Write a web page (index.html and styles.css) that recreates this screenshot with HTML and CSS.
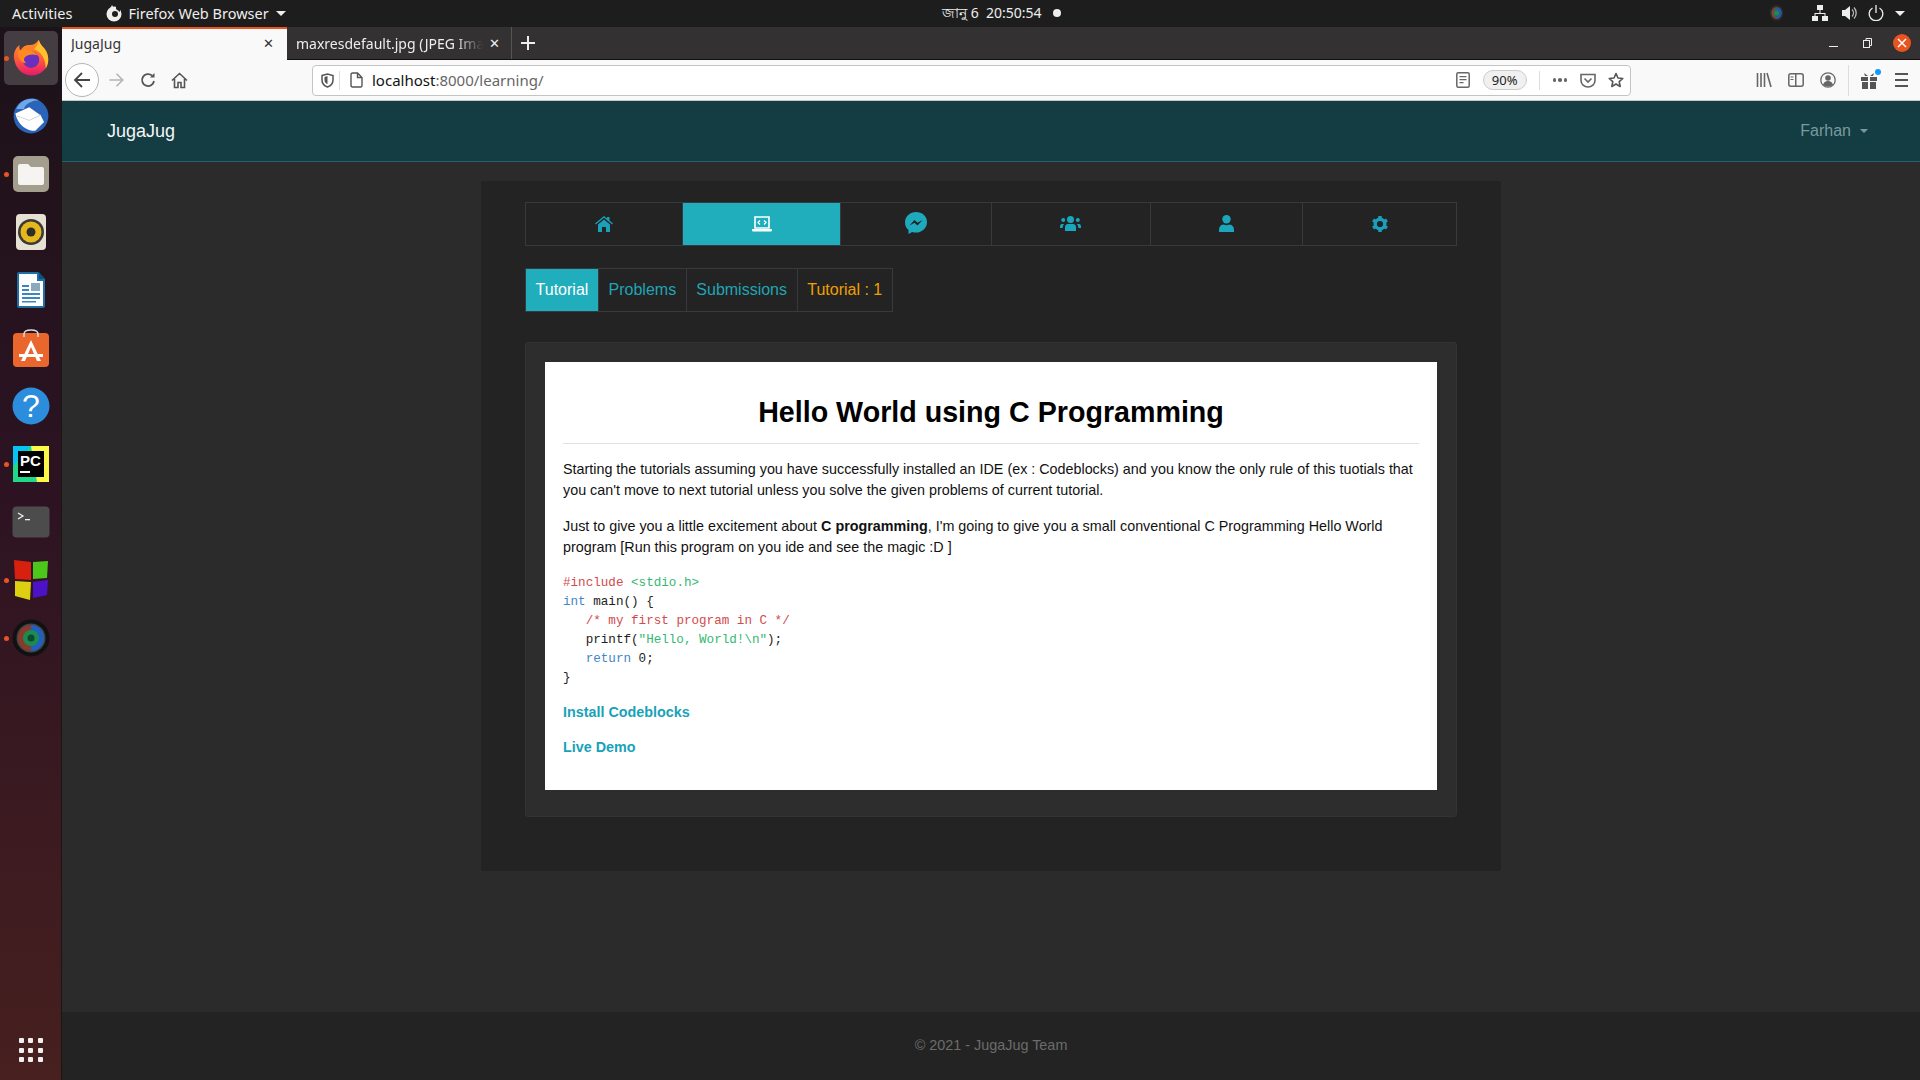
FILE: index.html
```html
<!DOCTYPE html>
<html lang="en">
<head>
    <meta charset="UTF-8">
    <title>JugaJug</title>
    <link rel="stylesheet" href="styles.css">
</head>
<body>
    <header class="topbar">
        <span class="activities">Activities</span>
        <div class="app-menu">
            <svg width="18" height="18" viewBox="0 0 18 18"><circle cx="9" cy="10" r="7.5" fill="#eee"/><circle cx="10" cy="10" r="3" fill="#1d1d1d"/><path d="M3.500 8 L7 1 L9 4.500 L7 8 Z" fill="#eee"/><path d="M11 2 L15 4 L15 8 L11 5 Z" fill="#1d1d1d"/></svg>
            <span>Firefox Web Browser</span>
            <i class="caret-white"></i>
        </div>
        <div class="clock"><span class="clock-text">জানু 6&nbsp; 20:50:54</span><i class="clock-dot"></i></div>
        <div class="tray">
            <svg class="tray-lens" width="15" height="18" viewBox="0 0 16 18"><ellipse cx="8" cy="9" rx="7.5" ry="8.5" fill="#2a2a2a"/><ellipse cx="8" cy="9" rx="5.500" ry="6.500" fill="#7a4a2a"/><ellipse cx="9.500" cy="9" rx="4" ry="5.500" fill="#2458a8"/><circle cx="8" cy="9" r="2.800" fill="#1d8a50"/></svg>
            <svg class="tray-net" width="16" height="16" viewBox="0 0 16 16" fill="#eee"><rect x="5" y="0" width="6" height="5"/><rect x="0" y="11" width="6" height="5"/><rect x="10" y="11" width="6" height="5"/><path d="M7.500 5h1v3h5v3h-1V9H3.500v2h-1V8h5z"/></svg>
            <svg class="tray-vol" width="16" height="16" viewBox="0 0 16 16"><path d="M0 5h3l5-4v14l-5-4H0z" fill="#eee"/><path d="M10 4.500a5 5 0 0 1 0 7M12 2.500a8 8 0 0 1 0 11" fill="none" stroke="#bbb" stroke-width="1.300"/></svg>
            <svg class="tray-power" width="16" height="16" viewBox="0 0 16 16" fill="none" stroke="#eee" stroke-width="1.300"><path d="M4.500 3a6.800 6.800 0 1 0 7 0"/><path d="M8 0v8"/></svg>
            <i class="caret-white"></i>
        </div>
    </header>

    <div class="desktop">
        <nav class="dock">
            <div class="dock-item dock-item-active"><i class="run-dot"></i>
                <svg width="40" height="40" viewBox="0 0 46 46">
                    <defs><linearGradient id="fx-body" x1="0" y1="0" x2="0" y2="1"><stop offset="0" stop-color="#ff9a1f"/><stop offset="0.55" stop-color="#ff5a3a"/><stop offset="1" stop-color="#e6186f"/></linearGradient></defs>
                    <path d="M32 2c1 5 4 7 7 11 5 7 5 17 0 23a20 20 0 0 1-35-10C2 18 5 11 10 8c-1 3 0 5 1 6 2-4 6-6 10-6 5 0 7-1 11-6z" fill="url(#fx-body)"/>
                    <path d="M32 2c1 5 4 7 7 11 5 7 5 16 1 22 0-10-5-20-14-22 2-2 6-5 6-11z" fill="#ffc22e"/>
                    <circle cx="23" cy="25" r="9.500" fill="#6a2fc0"/>
                    <path d="M8 16c5-4 12-4 16-1 2 1 4 2 7 5-6-2-12-1-15 2-2 2-1 5 2 7-6 0-11-6-10-13z" fill="#ff8a1f"/>
                </svg>
            </div>
            <div class="dock-item">
                <svg width="40" height="40" viewBox="0 0 46 46"><circle cx="23" cy="23" r="20" fill="#2a64b8"/><path d="M6 15C10 5 22 0 33 5 24 5 16 9 15 15z" fill="#6fa8e8"/><path d="M5 20l16-7 13 9 4 8-10 10C18 40 8 34 5 20z" fill="#fff"/><path d="M7 23l14 5 13-6" fill="none" stroke="#c8ccd4"/></svg>
            </div>
            <div class="dock-item"><i class="run-dot"></i>
                <svg width="38" height="38" viewBox="0 0 38 38"><rect width="36" height="36" x="1" y="1" rx="5" fill="#a39e8d"/><path d="M6 11q0-2 2-2h8l3 3h11q2 0 2 2v14q0 2-2 2H8q-2 0-2-2z" fill="#f5f4f1"/></svg>
            </div>
            <div class="dock-item">
                <svg width="32" height="38" viewBox="0 0 32 38"><rect width="30" height="36" x="1" y="1" rx="4" fill="#e6e1d3"/><circle cx="16" cy="19" r="13" fill="#3a3a36"/><circle cx="16" cy="19" r="10.500" fill="#e6b81e"/><circle cx="16" cy="19" r="4.500" fill="#2d2d2a"/></svg>
            </div>
            <div class="dock-item">
                <svg width="32" height="38" viewBox="0 0 32 38"><path d="M2 3q0-2 2-2h19l7 7v27q0 2-2 2H4q-2 0-2-2z" fill="#1d6fa5"/><path d="M4 3h18v7h6v25H4z" fill="#fff"/><path d="M24 1l6 7h-6z" fill="#12507c"/><path d="M7 14h7v2H7zM7 18h7v2H7zM7 22h18v2H7zM7 26h18v2H7zM7 30h14v1.500H7z" fill="#3a87bd"/><rect x="16" y="12" width="9" height="8" fill="#8aa8bf"/></svg>
            </div>
            <div class="dock-item">
                <svg width="38" height="40" viewBox="0 0 38 40"><rect x="1" y="5" width="36" height="34" rx="4" fill="#e9662c"/><path d="M12 9V6q0-4 7-4t7 4v3" fill="none" stroke="#ddd" stroke-width="1.500"/><path d="M19 12L9 33h4l6-14 6 14h4z" fill="#fff"/><path d="M7 26h24v3H7z" fill="#fff"/></svg>
            </div>
            <div class="dock-item">
                <svg width="38" height="38" viewBox="0 0 38 38"><circle cx="19" cy="19" r="18.500" fill="#2b8ddc"/><text x="19" y="30" text-anchor="middle" class="dock-help">?</text></svg>
            </div>
            <div class="dock-item"><i class="run-dot"></i>
                <svg width="36" height="36" viewBox="0 0 36 36"><rect width="36" height="36" fill="#21d789"/><path d="M18 0h18v36H24z" fill="#fcf84a"/><path d="M0 0h18L0 20z" fill="#07c3f2"/><rect x="5" y="5" width="26" height="26" fill="#000"/><text x="7" y="20" class="dock-pc">PC</text><rect x="7" y="25" width="10" height="2" fill="#fff"/></svg>
            </div>
            <div class="dock-item">
                <svg width="38" height="32" viewBox="0 0 38 32"><rect width="37" height="31" x="0.500" y="0.500" rx="4" fill="#4c4c4c"/><path d="M6 7l5 3-5 3" fill="none" stroke="#eee" stroke-width="1.300"/><path d="M13 13h5v1.300h-5z" fill="#eee"/></svg>
            </div>
            <div class="dock-item"><i class="run-dot"></i>
                <svg width="38" height="42" viewBox="0 0 38 42"><path d="M2 1l17 2v18L3 20z" fill="#d8200f"/><path d="M21 3l15-1-1 17-14 1z" fill="#4cc81a"/><path d="M3 22l16 1-1 18-15-4z" fill="#dcd010"/><path d="M21 23l15-2-1 15-14 3z" fill="#4c12c8"/></svg>
            </div>
            <div class="dock-item"><i class="run-dot"></i>
                <svg width="38" height="38" viewBox="0 0 38 38"><circle cx="19" cy="19" r="18.500" fill="#111"/><circle cx="19" cy="19" r="14.500" fill="#444"/><circle cx="19" cy="19" r="13" fill="#8a3a2a"/><path d="M19 6a13 13 0 0 1 0 26z" fill="#1f5fc0"/><circle cx="19" cy="19" r="8" fill="#1d8a50"/><circle cx="19" cy="19" r="3.500" fill="#0a4a30"/></svg>
            </div>
            <div class="dock-spacer"></div>
            <div class="dock-apps">
                <i></i><i></i><i></i><i></i><i></i><i></i><i></i><i></i><i></i>
            </div>
        </nav>

        <div class="browser">
            <div class="tabstrip">
                <div class="tab tab-active"><span class="tab-title">JugaJug</span><span class="tab-close">✕</span></div>
                <div class="tab"><span class="tab-title tab-fade">maxresdefault.jpg (JPEG Image</span><span class="tab-close">✕</span></div>
                <svg class="tab-new" width="14" height="14" viewBox="0 0 14 14"><path d="M6 0h2v6h6v2H8v6H6V8H0V6h6z" fill="#eee"/></svg>
                <div class="window-controls">
                    <i class="win-min"></i>
                    <svg class="win-restore" width="9" height="10" viewBox="0 0 9 10" fill="none" stroke="#eee"><rect x="0.500" y="2.500" width="6" height="7"/><path d="M3 2.500V0.500h5.500v7H7"/></svg>
                    <span class="win-close"><svg width="10" height="10" viewBox="0 0 10 10"><path d="M1 1l8 8M9 1l-8 8" stroke="#fff" stroke-width="1.500"/></svg></span>
                </div>
            </div>

            <div class="toolbar">
                <span class="back-btn"><svg width="18" height="18" viewBox="0 0 18 18" fill="none" stroke="#444" stroke-width="1.800"><path d="M17 9H2M9 2L2 9l7 7"/></svg></span>
                <svg class="tool-forward" width="17" height="16" viewBox="0 0 18 18" fill="none" stroke="#b4b4b4" stroke-width="1.800"><path d="M1 9h15M9 2l7 7-7 7"/></svg>
                <svg class="tool-reload" width="16" height="16" viewBox="0 0 16 16" fill="none" stroke="#555" stroke-width="1.800"><path d="M14 9a6 6 0 1 1-2-5.500"/><path d="M14.500 1v4.500H10" fill="#555" stroke="none"/></svg>
                <svg class="tool-home" width="17" height="17" viewBox="0 0 17 17" fill="none" stroke="#555" stroke-width="1.600"><path d="M1 8.500L8.500 1.500 16 8.500M3.500 7v8.500h3.500v-5h3v5h3.500V7"/></svg>

                <div class="urlbar">
                    <svg class="url-shield" width="13" height="15" viewBox="0 0 13 15"><path d="M1 2.500L6.500 1 12 2.500V7q0 5-5.500 7Q1 12 1 7z" fill="none" stroke="#555" stroke-width="1.500"/><path d="M6.500 3v8Q3.500 10 3.500 7V4z" fill="#555"/></svg>
                    <i class="url-sep"></i>
                    <svg class="url-page" width="13" height="16" viewBox="0 0 13 16" fill="none" stroke="#555" stroke-width="1.400"><path d="M2.500 1h5l4.500 4.500v8q0 1.500-1.500 1.500h-8Q1 15 1 13.500v-11Q1 1 2.500 1zM7.500 1v4.500H12"/></svg>
                    <span class="url-text"><b>localhost</b>:8000/learning/</span>
                    <svg class="url-reader" width="14" height="16" viewBox="0 0 14 16"><rect x="0.800" y="0.800" width="12.400" height="14.400" rx="1.500" fill="none" stroke="#666" stroke-width="1.500"/><path d="M3.500 4h7v1.300h-7zM3.500 7h7v1.300h-7zM3.500 10h4v1.300h-4z" fill="#666"/></svg>
                    <span class="url-zoom">90%</span>
                    <i class="url-sep url-sep-right"></i>
                    <span class="url-dots"><i></i><i></i><i></i></span>
                    <svg class="url-pocket" width="16" height="15" viewBox="0 0 16 15" fill="none" stroke="#666" stroke-width="1.600"><path d="M1 1.500h14v6a7 6.500 0 0 1-14 0z"/><path d="M4.500 5.500L8 9l3.500-3.500"/></svg>
                    <svg class="url-star" width="16" height="16" viewBox="0 0 16 16"><path d="M8 1.500l2 4.500 4.800.5-3.600 3.200 1 4.800L8 12l-4.200 2.500 1-4.800L1.200 6.500 6 6z" fill="none" stroke="#555" stroke-width="1.600" stroke-linejoin="round"/></svg>
                </div>

                <svg class="tool-library" width="16" height="16" viewBox="0 0 16 16" fill="none" stroke="#666" stroke-width="1.600"><path d="M1.500 1v14M5 1v14M8.500 1v14M11 1l4 14"/></svg>
                <svg class="tool-sidebar" width="16" height="14" viewBox="0 0 16 14"><rect x="0.800" y="0.800" width="14.400" height="12.400" rx="2" fill="none" stroke="#666" stroke-width="1.500"/><path d="M7 1h1.500v12H7z" fill="#666"/><path d="M2.500 3.500h3v1h-3zM2.500 6h3v1h-3z" fill="#666"/></svg>
                <svg class="tool-account" width="16" height="16" viewBox="0 0 16 16"><circle cx="8" cy="8" r="7.200" fill="none" stroke="#666" stroke-width="1.300"/><circle cx="8" cy="6" r="2.800" fill="#666"/><path d="M3 13q1-4 5-4t5 4q-5 3-10 0z" fill="#666"/></svg>
                <i class="tool-sep"></i>
                <span class="tool-gift">
                    <svg width="16" height="17" viewBox="0 0 16 17" fill="#555"><rect x="0" y="5" width="7" height="4"/><rect x="9" y="5" width="7" height="4"/><rect x="1" y="10" width="6" height="7"/><rect x="9" y="10" width="6" height="7"/><path d="M3 1l4 3H4zM13 1L9 4h3z"/></svg>
                    <i class="gift-dot"></i>
                </span>
                <span class="tool-menu"><i></i><i></i><i></i></span>
            </div>

            <div class="site">
                <div class="navbar">
                    <a class="brand">JugaJug</a>
                    <a class="nav-user">Farhan<i class="caret"></i></a>
                </div>

                <main class="content">
                    <div class="container">
                        <ul class="main-tabs">
                            <li>
                                <svg width="18" height="16" viewBox="0 0 18 16" fill="#1aa0b8"><path d="M9 0l3 2.500V1h2.500v3.600L18 7.500l-.8 1L9 1.800.8 8.500 0 7.500z"/><path d="M3 8.500L9 3.500l6 5V16h-4v-5H7v5H3z"/></svg>
                            </li>
                            <li class="active">
                                <svg width="20" height="16" viewBox="0 0 20 16"><path d="M3 1h14v11H3z" fill="none" stroke="#fff" stroke-width="1.600"/><path d="M8 4.500L6 6.500l2 2M12 4.500l2 2-2 2" fill="none" stroke="#fff" stroke-width="1.300"/><path d="M0 13h20v1.500q0 1-1 1H1q-1 0-1-1z" fill="#fff"/></svg>
                            </li>
                            <li class="tab-messenger">
                                <svg width="22" height="22" viewBox="0 0 22 22"><path d="M11 0C5 0 0 4.500 0 10.500c0 3 1.300 5.700 3.500 7.500v4l3.700-2c1.200.4 2.500.6 3.800.6 6 0 11-4.600 11-10.600S17 0 11 0z" fill="#1fa9bd"/><path d="M4.500 13.500L9.500 8l3 2.700L17.500 8l-5 5.500-3-2.700z" fill="#222"/></svg>
                            </li>
                            <li>
                                <svg width="21" height="15" viewBox="0 0 21 15" fill="#1aa7bd"><circle cx="10.500" cy="3.500" r="3.500"/><circle cx="3.200" cy="4" r="2"/><circle cx="17.800" cy="4" r="2"/><path d="M5 15v-3.500Q5 8 8 8h5q3 0 3 3.500V15z"/><path d="M0 11q0-3 2-3h2q-1 1-1.500 4H0zM21 11q0-3-2-3h-2q1 1 1.500 4H21z"/></svg>
                            </li>
                            <li>
                                <svg width="15" height="17" viewBox="0 0 15 17" fill="#1aa7bd"><circle cx="7.500" cy="4.200" r="4.200"/><path d="M0 17v-2q0-5 4.500-5.500 3 1.500 6 0Q15 10 15 15v2z"/></svg>
                            </li>
                            <li>
                                <svg width="16" height="16" viewBox="0 0 16 16"><circle cx="8" cy="8" r="4.800" fill="none" stroke="#1aa0bc" stroke-width="3.400"/><g stroke="#1aa0bc" stroke-width="3.400"><path d="M8 0v3M8 13v3"/><path d="M1 4l2.600 1.500M12.400 10.500L15 12"/><path d="M1 12l2.600-1.500M12.400 5.500L15 4"/></g></svg>
                            </li>
                        </ul>

                        <ul class="sub-tabs">
                            <li class="active">Tutorial</li>
                            <li>Problems</li>
                            <li>Submissions</li>
                            <li class="warn">Tutorial : 1</li>
                        </ul>

                        <section class="panel">
                            <article class="card">
                                <h1>Hello World using C Programming</h1>
                                <hr>
                                <p>Starting the tutorials assuming you have successfully installed an IDE (ex : Codeblocks) and you know the only rule of this tuotials that you can't move to next tutorial unless you solve the given problems of current tutorial.</p>
                                <p>Just to give you a little excitement about <b>C programming</b>, I'm going to give you a small conventional C Programming Hello World program [Run this program on you ide and see the magic :D ]</p>
<pre><span class="c-red">#include</span> <span class="c-green">&lt;stdio.h&gt;</span>
<span class="c-blue">int</span> main() {
   <span class="c-red">/* my first program in C */</span>
   printf(<span class="c-green">"Hello, World!\n"</span>);
   <span class="c-blue">return</span> 0;
}</pre>
                                <p><a class="link">Install Codeblocks</a></p>
                                <p><a class="link">Live Demo</a></p>
                            </article>
                        </section>
                    </div>
                </main>

                <footer class="footer">© 2021 - JugaJug Team</footer>
            </div>
        </div>
    </div>
</body>
</html>
```

FILE: styles.css
```css
* {
    margin: 0;
    padding: 0;
    box-sizing: border-box;
}

html, body {
    height: 100%;
    overflow: hidden;
}

body {
    display: flex;
    flex-direction: column;
    font-family: "Liberation Sans", Arial, sans-serif;
    background: #2b2b2b;
}

ul {
    list-style: none;
}

/* gnome bar */
.topbar {
    height: 27px;
    flex: none;
    display: flex;
    align-items: center;
    position: relative;
    padding: 0 0 1px 12px;
    background: #1d1d1d;
    color: #eee;
    font-family: "Noto Sans", sans-serif;
    font-size: 14.500px;
}

.app-menu {
    display: flex;
    align-items: center;
    margin-left: 33px;
    gap: 5px;
}

.caret-white {
    display: inline-block;
    border-top: 5px solid #eee;
    border-left: 5px solid transparent;
    border-right: 5px solid transparent;
    margin-left: 2px;
}

.clock {
    position: absolute;
    left: 942px;
    display: flex;
    align-items: center;
    gap: 12px;
    font-size: 14px;
    font-family: "Noto Sans", "DejaVu Sans", sans-serif;
}

.clock-text {
    padding-top: 2px;
}

.clock-dot {
    width: 8px;
    height: 8px;
    border-radius: 50%;
    background: #eee;
}

.tray {
    margin-left: auto;
    display: flex;
    align-items: center;
    padding-right: 15px;
}

.tray-lens {
    margin-right: 2px;
}

.tray-net {
    margin-left: 26px;
}

.tray-vol {
    margin-left: 14px;
}

.tray-power {
    margin-left: 10px;
}

.tray .caret-white {
    margin-left: 11px;
}

.desktop {
    flex: 1;
    display: flex;
    min-height: 0;
}

/* launcher */
.dock {
    width: 62px;
    flex: none;
    display: flex;
    flex-direction: column;
    padding-top: 2px;
    background: linear-gradient(180deg, #1c1219 0%, #2d1322 45%, #47201f 100%);
    border-right: 1px solid #1c1518;
}

.dock-item {
    height: 58px;
    flex: none;
    position: relative;
    display: flex;
    align-items: center;
    justify-content: center;
}

.dock-item-active::before {
    content: "";
    position: absolute;
    left: 4px;
    top: 2px;
    width: 54px;
    height: 54px;
    border-radius: 5px;
    background: #443d41;
}

.dock-item svg {
    position: relative;
}

.run-dot {
    position: absolute;
    left: 4px;
    top: 27px;
    width: 5px;
    height: 5px;
    border-radius: 50%;
    background: #e95420;
}

.dock-help {
    font-family: "Liberation Sans", sans-serif;
    font-size: 32px;
    fill: #fff;
}

.dock-pc {
    font-family: "Liberation Sans", sans-serif;
    font-weight: bold;
    font-size: 15px;
    fill: #fff;
}

.dock-spacer {
    flex: 1;
}

.dock-apps {
    display: grid;
    grid-template-columns: repeat(3, 5px);
    gap: 4.500px;
    justify-content: center;
    padding-bottom: 18px;
}

.dock-apps i {
    height: 5px;
    border-radius: 1px;
    background: #f2f0ef;
}

/* firefox */
.browser {
    flex: 1;
    min-width: 0;
    display: flex;
    flex-direction: column;
}

.tabstrip {
    height: 33px;
    flex: none;
    display: flex;
    align-items: stretch;
    background: #333132;
    border-bottom: 1px solid #111;
    font-family: "Noto Sans", sans-serif;
    font-size: 14px;
}

.tab {
    width: 225px;
    display: flex;
    align-items: center;
    justify-content: space-between;
    padding: 0 11px 0 9px;
    color: #eee;
    border-right: 1px solid #555;
}

.tab-active {
    height: 33px;
    padding: 0 13px 2px 9px;
    color: #333;
    background: #f9f9fa;
    border-top: 2px solid #e95420;
    border-right: none;
}

.tab-title {
    white-space: nowrap;
    overflow: hidden;
    flex: 1;
}

.tab-fade {
    -webkit-mask-image: linear-gradient(90deg, #000 85%, transparent);
    mask-image: linear-gradient(90deg, #000 85%, transparent);
}

.tab-close {
    font-size: 13px;
    margin-left: 6px;
    font-family: "DejaVu Sans", sans-serif;
}

.tab-new {
    align-self: center;
    margin-left: 9px;
}

.window-controls {
    margin-left: auto;
    display: flex;
    align-items: center;
    padding-right: 9px;
}

.win-min {
    width: 9px;
    height: 1.500px;
    background: #eee;
    margin-top: 7px;
}

.win-restore {
    margin-left: 25px;
    margin-right: 21px;
}

.win-close {
    width: 18px;
    height: 18px;
    border-radius: 50%;
    background: #e95420;
    display: flex;
    align-items: center;
    justify-content: center;
}

.toolbar {
    height: 41px;
    flex: none;
    display: flex;
    align-items: center;
    background: #f9f9fa;
    border-bottom: 1px solid #c8c8c8;
    padding-left: 3px;
}

.back-btn {
    width: 34px;
    height: 34px;
    border-radius: 50%;
    background: #fff;
    border: 1px solid #b5b5b5;
    display: flex;
    align-items: center;
    justify-content: center;
}

.tool-forward {
    margin-left: 9px;
}

.tool-reload {
    margin-left: 15px;
}

.tool-home {
    margin-left: 15px;
}

.urlbar {
    width: 1319px;
    height: 31px;
    margin-left: 124px;
    display: flex;
    align-items: center;
    background: #fff;
    border: 1px solid #c4c4c4;
    border-radius: 4px;
    font-family: "Noto Sans", sans-serif;
    font-size: 15px;
    color: #666;
}

.url-shield {
    margin-left: 8px;
}

.url-sep {
    width: 1px;
    height: 19px;
    margin-left: 5px;
    background: #ddd;
}

.url-page {
    margin-left: 10px;
}

.url-text {
    margin-left: 9px;
}

.url-text b {
    font-weight: 400;
    color: #111;
}

.url-reader {
    margin-left: auto;
}

.url-zoom {
    margin-left: 13px;
    padding: 0 8px;
    height: 20px;
    line-height: 19px;
    font-size: 13px;
    color: #222;
    background: #f0f0f0;
    border: 1px solid #ccc;
    border-radius: 10px;
}

.url-sep-right {
    margin-left: 12px;
}

.url-dots {
    display: flex;
    gap: 2px;
    margin-left: 13px;
}

.url-dots i {
    width: 3.500px;
    height: 3.500px;
    border-radius: 50%;
    background: #666;
}

.url-pocket {
    margin-left: 13px;
}

.url-star {
    margin-left: 12px;
    margin-right: 6px;
}

.tool-library {
    margin-left: 125px;
}

.tool-sidebar {
    margin-left: 16px;
}

.tool-account {
    margin-left: 16px;
}

.tool-sep {
    width: 1px;
    height: 31px;
    margin-left: 12px;
    background: #ddd;
}

.tool-gift {
    position: relative;
    display: flex;
    margin-left: 12px;
}

.gift-dot {
    position: absolute;
    right: -4px;
    top: -3px;
    width: 6px;
    height: 6px;
    border-radius: 50%;
    background: #0a9dff;
}

.tool-menu {
    display: flex;
    flex-direction: column;
    gap: 4px;
    margin-left: 18px;
}

.tool-menu i {
    width: 13px;
    height: 2px;
    background: #555;
}

/* page */
.site {
    flex: 1;
    min-height: 0;
    display: flex;
    flex-direction: column;
}

.navbar {
    height: 61px;
    flex: none;
    display: flex;
    align-items: center;
    justify-content: space-between;
    padding: 0 52px 0 45px;
    background: #143c43;
    border-bottom: 1px solid #2a6068;
}

.brand {
    font-size: 18px;
    color: #f2f6f6;
}

.nav-user {
    font-size: 16px;
    color: #7a9a9e;
    display: flex;
    align-items: center;
}

.caret {
    margin-left: 9px;
    border-top: 4px solid #7a9a9e;
    border-left: 4px solid transparent;
    border-right: 4px solid transparent;
}

.content {
    flex: 1;
    min-height: 0;
    padding-top: 19px;
}

.container {
    width: 1020px;
    height: 690px;
    margin: 0 auto;
    padding: 21px 44px 0;
    background: #232323;
    border-radius: 3px;
}

.main-tabs {
    display: grid;
    grid-template-columns: 157px 158px 150.500px 159px 152px 155.500px;
    height: 44px;
    border: 1px solid #343a40;
}

.main-tabs li {
    display: flex;
    align-items: center;
    justify-content: center;
    border-right: 1px solid #343a40;
    padding-bottom: 1px;
}

.main-tabs .tab-messenger {
    padding-bottom: 3px;
}

.main-tabs li:last-child {
    border-right: none;
}

.main-tabs .active {
    background: #20aebc;
}

.sub-tabs {
    display: inline-flex;
    height: 44px;
    margin-top: 22px;
    border: 1px solid #343a40;
    font-size: 16px;
    color: #20a5b5;
    vertical-align: top;
}

.sub-tabs li {
    display: flex;
    align-items: center;
    padding: 0 9.600px;
    border-right: 1px solid #343a40;
}

.sub-tabs li:last-child {
    border-right: none;
}

.sub-tabs .active {
    background: #20aebc;
    color: #fff;
}

.sub-tabs .warn {
    color: #f0a000;
}

.panel {
    width: 932px;
    height: 475px;
    margin-top: 30px;
    padding: 19px;
    background: #2d2d2d;
    border: 1px solid #333;
    border-radius: 3px;
}

.card {
    height: 428px;
    padding: 32.500px 18px 0;
    background: #fff;
    color: #111;
    font-size: 14.340px;
    line-height: 21.400px;
}

.card h1 {
    font-size: 28.650px;
    line-height: 34.500px;
    text-align: center;
    color: #000;
}

.card hr {
    border: none;
    height: 1px;
    margin: 14px 0 15px;
    background: #e2e2e2;
}

.card p {
    margin-bottom: 14.200px;
}

.card pre {
    font-family: "Liberation Mono", monospace;
    font-size: 12.600px;
    line-height: 18.900px;
    padding-top: 1px;
    margin-bottom: 14.200px;
    color: #222;
}

.c-red {
    color: #d14b4b;
}

.c-green {
    color: #35b872;
}

.c-blue {
    color: #3f86c8;
}

.link {
    font-weight: bold;
    color: #18a2b8;
}

.footer {
    height: 68px;
    flex: none;
    display: flex;
    align-items: center;
    justify-content: center;
    padding-bottom: 2px;
    background: #232323;
    color: #6c6c6c;
    font-size: 14.400px;
}
```
